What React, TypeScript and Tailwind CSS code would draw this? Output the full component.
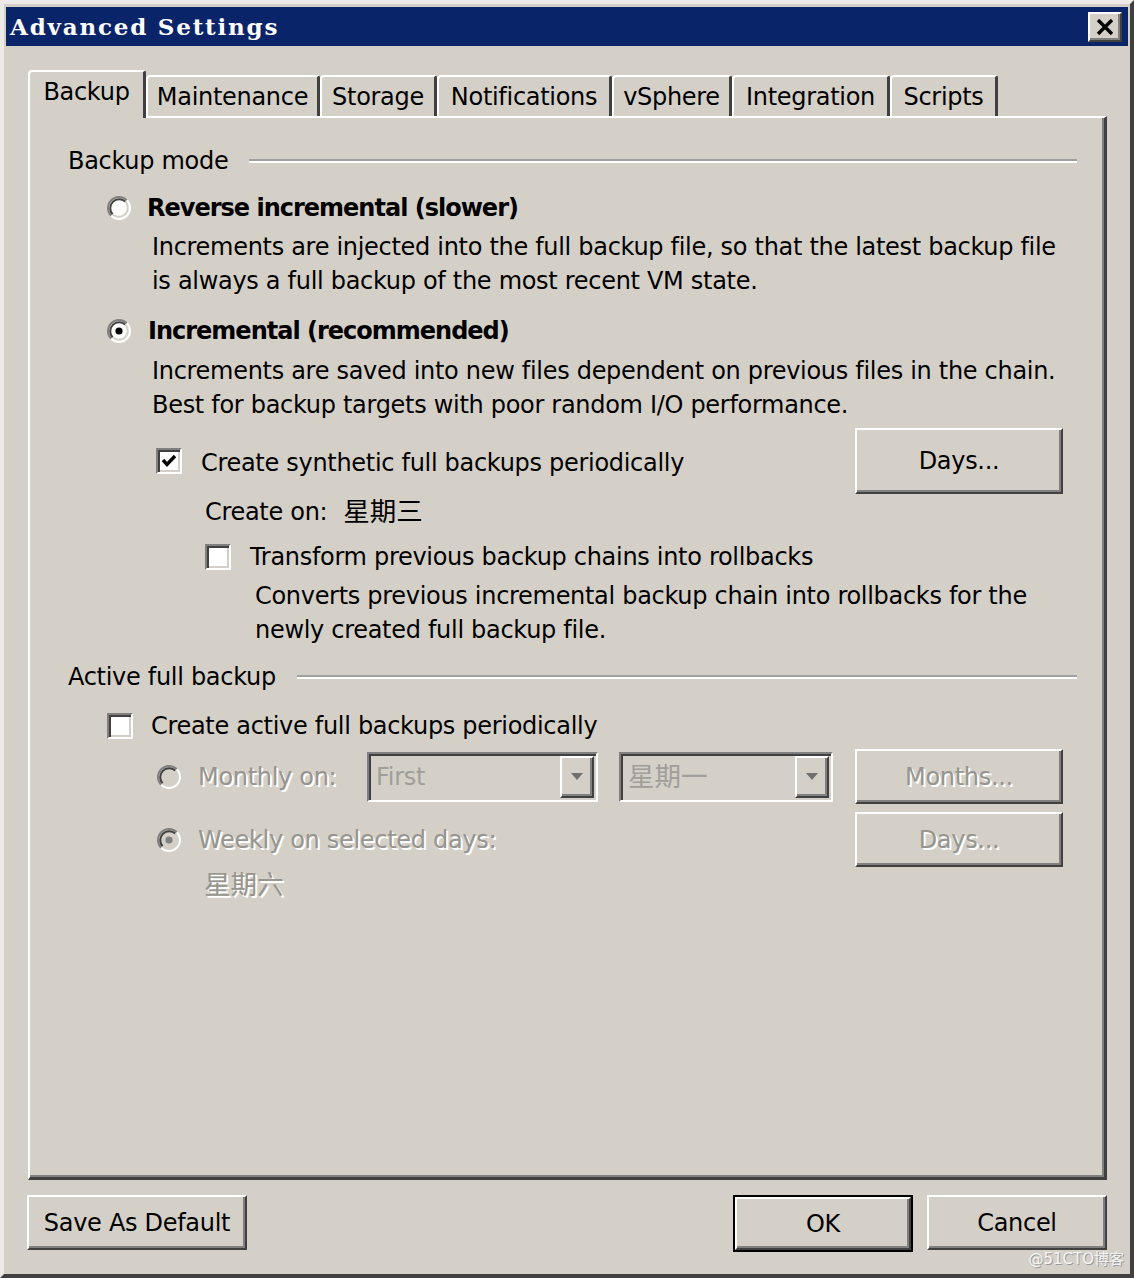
import type { ReactNode } from "react";

const raised =
  "bg-[#d4d0c8] border-2 border-t-white border-l-white border-r-[#404040] border-b-[#404040] shadow-[inset_-2px_-2px_0_#808080]";
const sunken =
  "border-2 border-t-[#808080] border-l-[#808080] border-r-white border-b-white shadow-[inset_2px_2px_0_#404040,inset_-2px_-2px_0_#d4d0c8]";
const dim = "text-[#97958f] [text-shadow:2px_2px_0_#ffffff]";
const cjk = "text-[26.5px] tracking-normal";

function Radio({ checked, disabled }: { checked?: boolean; disabled?: boolean }) {
  return (
    <svg width="24" height="24" viewBox="0 0 24 24" className="shrink-0">
      <circle cx="12" cy="12" r="10" fill={disabled ? "#d4d0c8" : "#ffffff"} />
      <path d="M4.22 19.78A11 11 0 0 1 19.78 4.22" fill="none" stroke="#808080" strokeWidth="2" />
      <path d="M19.78 4.22A11 11 0 0 1 4.22 19.78" fill="none" stroke="#ffffff" strokeWidth="2" />
      <path d="M5.64 18.36A9 9 0 0 1 18.36 5.64" fill="none" stroke="#404040" strokeWidth="2" />
      <path d="M18.36 5.64A9 9 0 0 1 5.64 18.36" fill="none" stroke="#d4d0c8" strokeWidth="2" />
      {checked && <circle cx="12" cy="12" r="3.6" fill={disabled ? "#808080" : "#000000"} />}
    </svg>
  );
}

function Check({ checked }: { checked?: boolean }) {
  return (
    <div className={`w-[26px] h-[26px] shrink-0 bg-white flex items-center justify-center ${sunken}`}>
      {checked && (
        <svg width="18" height="18" viewBox="0 0 18 18">
          <polyline points="3,8 7,12.5 15,4" fill="none" stroke="#000" strokeWidth="3.4" />
        </svg>
      )}
    </div>
  );
}

function Button({
  children,
  className = "",
  disabled,
}: {
  children: ReactNode;
  className?: string;
  disabled?: boolean;
}) {
  return (
    <div className={`flex items-center justify-center ${raised} ${disabled ? dim : ""} ${className}`}>
      {children}
    </div>
  );
}

function Combo({ value, width, textClass = "" }: { value: string; width: string; textClass?: string }) {
  return (
    <div className={`h-[50px] flex p-[2px] bg-[#d4d0c8] ${sunken} ${width}`}>
      <div className={`flex-1 flex items-center pl-[5px] text-[#a09e9a] ${textClass}`}>{value}</div>
      <div className={`w-[34px] flex items-center justify-center ${raised}`}>
        <svg width="12" height="8" viewBox="0 0 12 8">
          <polygon points="0,0 12,0 6,7" fill="#707070" />
        </svg>
      </div>
    </div>
  );
}

function GroupHeader({ title, className }: { title: string; className: string }) {
  return (
    <div className={`flex items-center h-[34px] ml-[38px] mr-[27px] ${className}`}>
      <span>{title}</span>
      <div className="flex-1 ml-[21px] border-t-2 border-t-[#a0a0a0] border-b-2 border-b-white" />
    </div>
  );
}

const tabs = [
  { label: "Maintenance", w: "w-[174px]" },
  { label: "Storage", w: "w-[117px]" },
  { label: "Notifications", w: "w-[175px]" },
  { label: "vSphere", w: "w-[120px]" },
  { label: "Integration", w: "w-[158px]" },
  { label: "Scripts", w: "w-[108px]" },
];

export default function App() {
  return (
    <div className="relative w-[1134px] h-[1278px] bg-[#d4d0c8] text-black text-[24px] leading-[34px] tracking-[-0.3px] font-['DejaVu_Sans','Noto_Sans_CJK_SC',sans-serif] border-t-[4px] border-l-[4px] border-t-[#ecebe7] border-l-[#ecebe7] border-r-[4px] border-b-[4px] border-r-[#404040] border-b-[#404040] px-[2px] pt-[3px]">
      {/* title bar */}
      <div className="h-[39px] bg-[#0a246a] flex items-center justify-between pl-[4px] pr-[6px]">
        <span className="text-white font-bold text-[23px] font-['DejaVu_Serif',serif] tracking-[1.8px]">
          Advanced Settings
        </span>
        <div className={`w-[34px] h-[30px] flex items-center justify-center ${raised}`}>
          <svg width="18" height="16" viewBox="0 0 18 16">
            <path d="M2 1L16 15M16 1L2 15" stroke="#000" strokeWidth="3.4" />
          </svg>
        </div>
      </div>

      {/* tabs */}
      <div className="flex items-end h-[46px] mt-[24px] ml-[22px]">
        <div className="relative z-10 w-[118px] h-[48px] -mb-[2px] bg-[#d4d0c8] flex items-center justify-center pb-[6px] border-t-2 border-l-2 border-t-white border-l-white border-r-[3px] border-r-[#404040] rounded-tl-[4px] rounded-tr-[3px]">
          Backup
        </div>
        {tabs.map((t) => (
          <div
            key={t.label}
            className={`${t.w} h-[41px] flex items-center justify-center border-t-2 border-l-2 border-t-white border-l-white border-r-[3px] border-r-[#404040] rounded-tl-[4px] rounded-tr-[3px]`}
          >
            {t.label}
          </div>
        ))}
      </div>

      {/* panel */}
      <div className="relative ml-[22px] w-[1079px] h-[1064px] border-t-2 border-l-2 border-t-white border-l-white border-r-[3px] border-b-[3px] border-r-[#404040] border-b-[#404040] shadow-[inset_-2px_-2px_0_#808080]">
        <GroupHeader title="Backup mode" className="mt-[26px]" />

        <div className="flex items-center h-[34px] mt-[13px] ml-[77px]">
          <Radio />
          <span className="ml-[16px] font-bold tracking-[-1px]">Reverse incremental (slower)</span>
        </div>
        <div className="mt-[5px] ml-[122px]">
          <div>Increments are injected into the full backup file, so that the latest backup file</div>
          <div>is always a full backup of the most recent VM state.</div>
        </div>

        <div className="flex items-center h-[34px] mt-[16px] ml-[77px]">
          <Radio checked />
          <span className="ml-[17px] font-bold tracking-[-1px]">Incremental (recommended)</span>
        </div>
        <div className="mt-[6px] ml-[122px]">
          <div>Increments are saved into new files dependent on previous files in the chain.</div>
          <div>Best for backup targets with poor random I/O performance.</div>
        </div>

        <div className="flex items-center h-[66px] mt-[6px] ml-[126px] mr-[41px]">
          <Check checked />
          <span className="ml-[19px] mt-[3px]">Create synthetic full backups periodically</span>
          <Button className="ml-auto w-[208px] h-[66px]">Days...</Button>
        </div>

        <div className="flex items-center h-[34px] mt-[1px] ml-[175px]">
          <span>Create on:</span>
          <span className={`ml-[16px] ${cjk}`}>星期三</span>
        </div>

        <div className="flex items-center h-[34px] mt-[11px] ml-[175px]">
          <Check />
          <span className="ml-[19px]">Transform previous backup chains into rollbacks</span>
        </div>
        <div className="mt-[5px] ml-[225px]">
          <div>Converts previous incremental backup chain into rollbacks for the</div>
          <div>newly created full backup file.</div>
        </div>

        <GroupHeader title="Active full backup" className="mt-[13px]" />

        <div className="flex items-center h-[34px] mt-[15px] ml-[77px]">
          <Check />
          <span className="ml-[18px]">Create active full backups periodically</span>
        </div>

        <div className="flex items-center h-[55px] mt-[6px] ml-[127px] mr-[41px]">
          <div className="w-[210px] flex items-center">
            <Radio disabled />
            <span className={`ml-[17px] ${dim}`}>Monthly on:</span>
          </div>
          <Combo value="First" width="w-[231px]" />
          <Combo value="星期一" width="ml-[21px] w-[214px]" textClass={cjk} />
          <Button disabled className="ml-auto w-[208px] h-[55px]">
            Months...
          </Button>
        </div>

        <div className="flex items-center h-[55px] mt-[8px] ml-[127px] mr-[41px]">
          <Radio checked disabled />
          <span className={`ml-[17px] ${dim}`}>Weekly on selected days:</span>
          <Button disabled className="ml-auto w-[208px] h-[55px]">
            Days...
          </Button>
        </div>

        <div className={`h-[34px] mt-[1px] ml-[174px] ${dim} ${cjk}`}>星期六</div>
      </div>

      {/* footer buttons */}
      <div className="flex mt-[15px] ml-[21px]">
        <Button className="w-[220px] h-[55px]">Save As Default</Button>
        <div className="ml-[486px] w-[180px] h-[57px] border-2 border-black">
          <Button className="w-full h-full">OK</Button>
        </div>
        <Button className="ml-[14px] w-[180px] h-[55px]">Cancel</Button>
      </div>

      <span className="absolute right-[6px] bottom-[6px] text-[15px] leading-[18px] tracking-normal text-[#f4f4f4] [text-shadow:1px_1px_0_#9a9a9a]">
        @51CTO博客
      </span>
    </div>
  );
}
